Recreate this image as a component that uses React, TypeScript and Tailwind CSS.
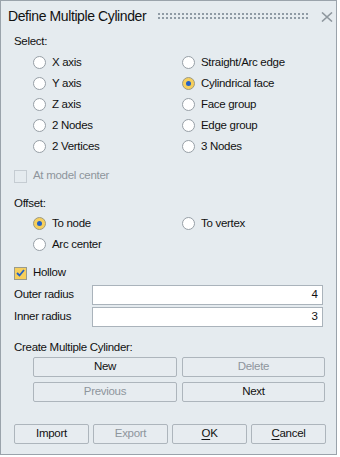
import React from "react";

const FONT = { fontFamily: '"Liberation Sans", Arial, sans-serif' };

function Radio({ label, checked = false }: { label: string; checked?: boolean }) {
  return (
    <div className="flex h-[21px] items-center">
      <span
        className={`flex h-[13px] w-[13px] shrink-0 items-center justify-center rounded-full border ${
          checked ? "border-[#9b9a86] bg-[#f6cf5c]" : "border-[#979fa6] bg-white"
        }`}
      >
        {checked && <span className="h-[5px] w-[5px] rounded-full bg-[#2461c4]" />}
      </span>
      <span className="ml-[6px] text-[11.5px] tracking-[-0.3px] text-[#111]">{label}</span>
    </div>
  );
}

function Btn({
  children,
  disabled = false,
  className = "",
}: {
  children: React.ReactNode;
  disabled?: boolean;
  className?: string;
}) {
  return (
    <button
      type="button"
      className={`flex h-[20px] items-center justify-center rounded-[2px] border border-[#adb5bc] bg-[#e7ecf0] text-[11.5px] tracking-[-0.3px] ${
        disabled ? "text-[#8e959c]" : "text-[#111]"
      } ${className}`}
    >
      {children}
    </button>
  );
}

function Field({ label, value }: { label: string; value: string }) {
  return (
    <div className="flex h-[20px] items-center">
      <span className="w-[79px] text-[11.5px] tracking-[-0.3px] text-[#111]">{label}</span>
      <div className="flex h-[20px] w-[232px] items-center justify-end border border-[#aab3bb] bg-white pr-[4px] text-[11.5px] text-[#111]">
        {value}
      </div>
    </div>
  );
}

export default function App() {
  return (
    <div className="h-[457px] w-[340px] bg-white" style={FONT}>
      <div className="flex h-[455px] w-[337px] flex-col border border-[#9aa3ab] bg-[#e5ebef]">
        {/* title bar */}
        <div className="flex h-[31px] items-center pl-[7px] pr-[3px]">
          <span className="whitespace-nowrap text-[14px] tracking-[-0.4px] text-[#111]">Define Multiple Cylinder</span>
          <svg className="ml-[12px] shrink-0" width="150" height="7" viewBox="0 0 150 7">
            {Array.from({ length: 38 }).map((_, i) => (
              <g key={i} fill="#8f9ba5">
                <rect x={i * 4} y={0} width="2" height="2" />
                <rect x={i * 4} y={4} width="2" height="2" />
              </g>
            ))}
          </svg>
          <svg className="ml-auto shrink-0" width="12" height="10" viewBox="0 0 12 10">
            <path d="M1 0.5 L11 9.5 M11 0.5 L1 9.5" stroke="#8e979e" strokeWidth="1.6" />
          </svg>
        </div>

        <div className="flex flex-col px-[13px]">
          <div className="flex h-[20px] items-center text-[11.5px] tracking-[-0.3px] text-[#111]">Select:</div>
          <div className="grid grid-cols-[149px_1fr] pl-[19px]">
            <Radio label="X axis" />
            <Radio label="Straight/Arc edge" />
            <Radio label="Y axis" />
            <Radio label="Cylindrical face" checked />
            <Radio label="Z axis" />
            <Radio label="Face group" />
            <Radio label="2 Nodes" />
            <Radio label="Edge group" />
            <Radio label="2 Vertices" />
            <Radio label="3 Nodes" />
          </div>

          <div className="mt-[9px] flex h-[20px] items-center">
            <span className="h-[13px] w-[13px] border border-[#c5ccd2]" />
            <span className="ml-[6px] text-[11.5px] tracking-[-0.3px] text-[#8e959c]">At model center</span>
          </div>

          <div className="mt-[9px] flex h-[18px] items-center text-[11.5px] tracking-[-0.3px] text-[#111]">Offset:</div>
          <div className="grid grid-cols-[149px_1fr] pl-[19px]">
            <Radio label="To node" checked />
            <Radio label="To vertex" />
            <Radio label="Arc center" />
          </div>

          <div className="mt-[8px] flex h-[20px] items-center">
            <span className="flex h-[13px] w-[13px] items-center justify-center border border-[#9a9b8c] bg-[#f6cf5c]">
              <svg width="9" height="8" viewBox="0 0 9 8">
                <path d="M1 4 L3.5 6.5 L8 1" fill="none" stroke="#2461c4" strokeWidth="1.8" />
              </svg>
            </span>
            <span className="ml-[6px] text-[11.5px] tracking-[-0.3px] text-[#111]">Hollow</span>
          </div>

          <div className="mt-[2px] flex flex-col gap-[2px]">
            <Field label="Outer radius" value="4" />
            <Field label="Inner radius" value="3" />
          </div>

          <div className="mt-[12px] flex h-[18px] items-center text-[11.5px] tracking-[-0.3px] text-[#111]">
            Create Multiple Cylinder:
          </div>
          <div className="grid grid-cols-[144px_143px] gap-x-[5px] gap-y-[5px] pl-[19px]">
            <Btn>New</Btn>
            <Btn disabled>Delete</Btn>
            <Btn disabled>Previous</Btn>
            <Btn>Next</Btn>
          </div>

          <div className="mt-[22px] grid w-[312px] grid-cols-4 gap-[4px]">
            <Btn>Import</Btn>
            <Btn disabled>Export</Btn>
            <Btn>
              <span className="underline underline-offset-2">O</span>K
            </Btn>
            <Btn>
              <span className="underline underline-offset-2">C</span>ancel
            </Btn>
          </div>
        </div>
      </div>
    </div>
  );
}
